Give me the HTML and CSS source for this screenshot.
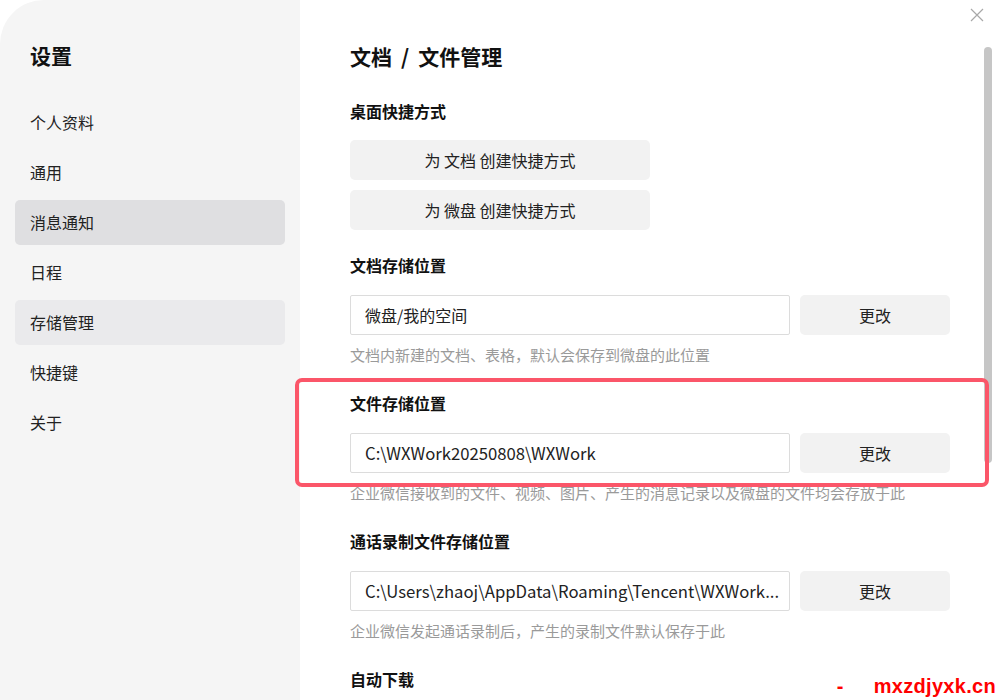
FILE: index.html
```html
<!DOCTYPE html>
<html>
<head>
<meta charset="utf-8">
<link rel="stylesheet" href="styles.css">
</head>
<body>
  <div class="window">
    <div class="sidebar">
      <h1 class="side-title">设置</h1>
      <div class="nav">
        <div class="nav-item">个人资料</div>
        <div class="nav-item">通用</div>
        <div class="nav-item hover">消息通知</div>
        <div class="nav-item">日程</div>
        <div class="nav-item active">存储管理</div>
        <div class="nav-item">快捷键</div>
        <div class="nav-item">关于</div>
      </div>
    </div>

    <div class="main">
      <h2 class="page-title">文档<span class="slash">/</span>文件管理</h2>

      <div class="section first">
        <h3 class="sec-title">桌面快捷方式</h3>
        <div class="btn wide">为 文档 创建快捷方式</div>
        <div class="btn wide">为 微盘 创建快捷方式</div>
      </div>

      <div class="section">
        <h3 class="sec-title">文档存储位置</h3>
        <div class="path-row">
          <div class="path-input">微盘/我的空间</div>
          <div class="btn change">更改</div>
        </div>
        <p class="hint">文档内新建的文档、表格，默认会保存到微盘的此位置</p>
      </div>

      <div class="section">
        <h3 class="sec-title">文件存储位置</h3>
        <div class="path-row">
          <div class="path-input latin">C:\WXWork20250808\WXWork</div>
          <div class="btn change">更改</div>
        </div>
        <p class="hint">企业微信接收到的文件、视频、图片、产生的消息记录以及微盘的文件均会存放于此</p>
      </div>

      <div class="section">
        <h3 class="sec-title">通话录制文件存储位置</h3>
        <div class="path-row">
          <div class="path-input latin">C:\Users\zhaoj\AppData\Roaming\Tencent\WXWork...</div>
          <div class="btn change">更改</div>
        </div>
        <p class="hint">企业微信发起通话录制后，产生的录制文件默认保存于此</p>
      </div>

      <div class="section">
        <h3 class="sec-title">自动下载</h3>
      </div>

      <div class="scrollbar"></div>
    </div>

    <!-- overlays -->
    <svg class="close" width="14" height="14" viewBox="0 0 14 14">
      <path d="M1 1 L13 13 M13 1 L1 13" stroke="#a8a8a8" stroke-width="1.2" fill="none"/>
    </svg>
    <div class="mark-box"></div>
    <div class="watermark"><span class="dash">-</span><span>mxzdjyxk.cn</span></div>
  </div>
</body>
</html>
```

FILE: styles.css
```css
* {box-sizing: border-box;}

html, body {
  margin: 0;
  padding: 0;
  background: #fff;
}

body {
  font-family: "Noto Sans CJK SC", sans-serif;
  color: #1f1f1f;
}

.window {
  position: relative;
  display: flex;
  width: 1000px;
  height: 700px;
  overflow: hidden;
  background: #fff;
}

/* left column */
.sidebar {
  width: 300px;
  flex-shrink: 0;
  background: #f5f5f5;
  border-top-left-radius: 44px;
  padding: 40px 15px 0 15px;
}

.side-title {
  margin: 0 0 0 15px;
  font-size: 21px;
  line-height: 30px;
  font-weight: bold;
  color: #111;
}

.nav {
  margin-top: 30px;
  display: flex;
  flex-direction: column;
  gap: 5px;
}

.nav-item {
  height: 45px;
  line-height: 45px;
  padding-left: 15px;
  font-size: 16px;
  color: #222;
  border-radius: 5px;
}

.nav-item.hover {
  background: #dfdfe1;
}

.nav-item.active {
  background: #eaeaec;
}

/* right column */
.main {
  position: relative;
  flex: 1;
  padding: 41px 0 0 50px;
}

.page-title {
  margin: 0;
  font-size: 21px;
  line-height: 30px;
  font-weight: bold;
  color: #111;
}

.page-title .slash {
  margin: 0 9px;
}

.section {
  width: 600px;
  margin-top: 26px;
}

.section.first {
  margin-top: 28px;
  margin-bottom: 23px;
}

.section.first + .section {
  margin-top: 0;
}

.sec-title {
  margin: 0 0 18px 0;
  font-size: 16px;
  line-height: 24px;
  font-weight: bold;
  color: #111;
}

.section.first .sec-title {
  margin-bottom: 17px;
}

.btn {
  height: 40px;
  line-height: 40px;
  text-align: center;
  background: #f2f2f2;
  border-radius: 5px;
  font-size: 16px;
  color: #222;
}

.btn.wide {
  width: 300px;
}

.btn.wide + .btn.wide {
  margin-top: 10px;
}

.path-row {
  display: flex;
  gap: 10px;
}

.path-input {
  width: 440px;
  height: 40px;
  line-height: 38px;
  padding: 0 14px;
  border: 1px solid #dcdcdc;
  border-radius: 2px;
  font-size: 16px;
  color: #222;
  white-space: nowrap;
  overflow: hidden;
}

.path-input.latin {
  font-size: 16.7px;
}

.btn.change {
  width: 150px;
}

.hint {
  margin: 10px 0 0 0;
  font-size: 15px;
  line-height: 20px;
  color: #9a9a9a;
}

.scrollbar {
  position: absolute;
  top: 47px;
  right: 8px;
  width: 8px;
  height: 416px;
  border-radius: 4px;
  background: #c6c6c6;
}

.close {
  position: absolute;
  top: 8px;
  right: 16px;
}

.mark-box {
  position: absolute;
  left: 295px;
  top: 378px;
  width: 694px;
  height: 109px;
  border: 4px solid #fb5669;
  border-radius: 7px;
}

.watermark {
  position: absolute;
  right: 4px;
  bottom: 2px;
  font-family: "Liberation Sans", sans-serif;
  font-size: 20px;
  letter-spacing: 0.3px;
  font-weight: bold;
  color: #ff0000;
}

.watermark .dash {
  margin-right: 30px;
}
```
